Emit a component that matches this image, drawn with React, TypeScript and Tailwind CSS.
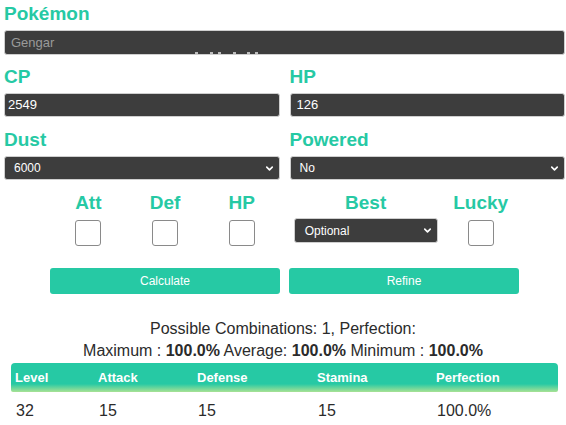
import { ChevronDown } from 'lucide-react';

function Label({ children }: { children: React.ReactNode }) {
  return <div className="text-[#26c9a4] font-bold text-[19px] leading-[22px]">{children}</div>;
}

function Field({ value, muted, pad = 'px-[3px]' }: { value: string; muted?: boolean; pad?: string }) {
  return (
    <div className={`h-[24px] bg-[#3d3d3d] rounded-[3px] border border-[#cfcfcf] flex items-center ${pad}`}>
      <span className={`text-[13px] ${muted ? 'text-[#9a9a9a]' : 'text-white'}`}>{value}</span>
    </div>
  );
}

function Select({ value, className = '' }: { value: string; className?: string }) {
  return (
    <div className={`bg-[#3d3d3d] rounded-[3px] border border-[#cfcfcf] flex items-center justify-between pl-[9px] pr-[4px] ${className}`}>
      <span className="text-[12px] text-white">{value}</span>
      <ChevronDown size={11} strokeWidth={3.5} className="text-white" />
    </div>
  );
}

function Check() {
  return <div className="w-[26px] h-[26px] rounded-[3px] border border-[#8a8a8a] bg-white" />;
}

export default function App() {
  const cols = [
    { h: 'Level', v: '32', w: 'w-[83px]' },
    { h: 'Attack', v: '15', w: 'w-[99px]' },
    { h: 'Defense', v: '15', w: 'w-[120px]' },
    { h: 'Stamina', v: '15', w: 'w-[119px]' },
    { h: 'Perfection', v: '100.0%', w: 'flex-1' },
  ];

  return (
    <div className="w-[566px] h-[425px] bg-white overflow-hidden font-['Liberation_Sans',Arial,sans-serif]">
      <div className="pt-[3px] pl-[4px] pr-[1px]">
        <Label>Pokémon</Label>
        <div className="mt-[5px] relative">
          <div className="h-[25px] bg-[#3d3d3d] rounded-[3px] border border-[#cfcfcf] flex items-center px-[6px]">
            <span className="text-[13px] text-[#9a9a9a]">Gengar</span>
          </div>
          {[0, 15, 23, 38, 52, 60].map((x) => (
            <span key={x} className="absolute top-[22px] w-[3px] h-[2px] bg-[#bdbdbd]" style={{ left: 191 + x }} />
          ))}
        </div>

        <div className="mt-[11px] grid grid-cols-2 gap-x-[10px]">
          <div>
            <Label>CP</Label>
            <div className="mt-[5px]">
              <Field value="2549" />
            </div>
          </div>
          <div>
            <Label>HP</Label>
            <div className="mt-[5px]">
              <Field value="126" pad="px-[6px]" />
            </div>
          </div>
        </div>

        <div className="mt-[12px] grid grid-cols-2 gap-x-[10px]">
          <div>
            <Label>Dust</Label>
            <div className="mt-[5px]">
              <Select value="6000" className="h-[24px]" />
            </div>
          </div>
          <div>
            <Label>Powered</Label>
            <div className="mt-[5px]">
              <Select value="No" className="h-[24px]" />
            </div>
          </div>
        </div>
      </div>

      <div className="mt-[12px] ml-[50px] flex gap-[9px]">
        <div className="w-[230px] grid grid-cols-3">
          {['Att', 'Def', 'HP'].map((t) => (
            <div key={t} className="flex flex-col items-center">
              <Label>{t}</Label>
              <div className="mt-[6px]">
                <Check />
              </div>
            </div>
          ))}
        </div>
        <div className="w-[230px] grid grid-cols-3">
          <div className="col-span-2 flex flex-col items-center">
            <Label>Best</Label>
            <div className="mt-[4px] w-[144px]">
              <Select value="Optional" className="h-[25px] pl-[10px]" />
            </div>
          </div>
          <div className="flex flex-col items-center">
            <Label>Lucky</Label>
            <div className="mt-[6px]">
              <Check />
            </div>
          </div>
        </div>
      </div>

      <div className="mt-[22px] flex gap-[9px] pl-[50px]">
        <button className="w-[230px] h-[26px] rounded-[3px] bg-[#26c9a4] text-white text-[12px]">Calculate</button>
        <button className="w-[230px] h-[26px] rounded-[3px] bg-[#26c9a4] text-white text-[12px]">Refine</button>
      </div>

      <div className="mt-[24px] text-[#2b2b2b] text-[16px] leading-[22px] text-center">
        <div>Possible Combinations: 1, Perfection:</div>
        <div>
          Maximum : <b>100.0%</b> Average: <b>100.0%</b> Minimum : <b>100.0%</b>
        </div>
      </div>

      <div className="mx-[11px] mt-[1px] w-[547px]">
        <div className="h-[29px] rounded-t-[4px] rounded-b-[2px] flex items-center pl-[4px] bg-[linear-gradient(to_bottom,#26c9a4_0%,#26c9a4_72%,#a9e294_100%)]">
          {cols.map((c) => (
            <div key={c.h} className={`${c.w} text-white font-bold text-[13px]`}>{c.h}</div>
          ))}
        </div>
        <div className="h-[38px] flex items-center pl-[5px]">
          {cols.map((c) => (
            <div key={c.h} className={`${c.w} text-[#2b2b2b] text-[16px]`}>{c.v}</div>
          ))}
        </div>
      </div>
    </div>
  );
}
